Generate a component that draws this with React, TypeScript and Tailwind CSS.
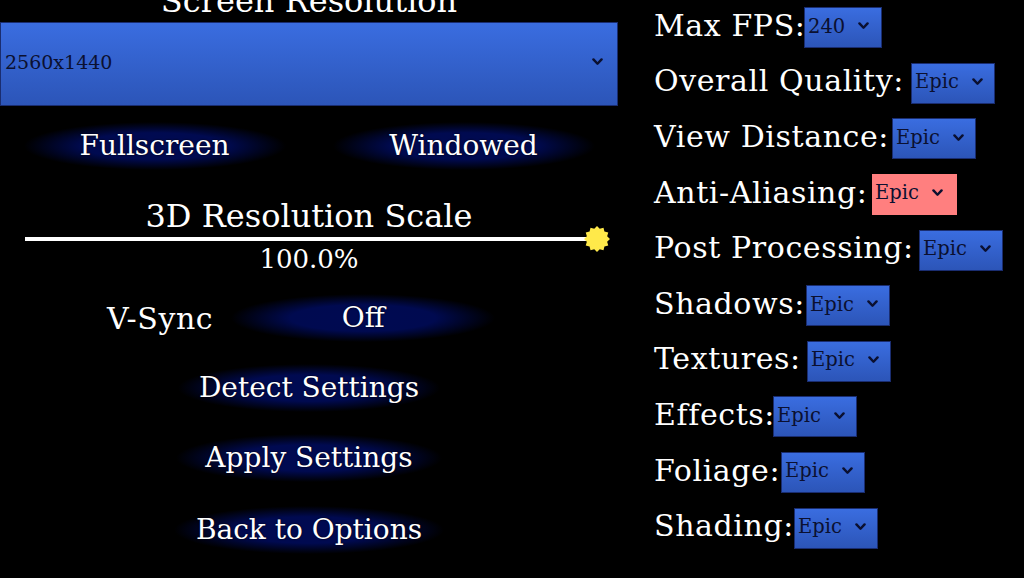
import React from "react";

function Chevron({ size = 10 }: { size?: number }) {
  return (
    <svg width={size} height={size * 0.7} viewBox="0 0 10 7" className="shrink-0">
      <path d="M1.3 1.3 L5 5.2 L8.7 1.3" fill="none" stroke="#0b1030" strokeWidth="2.2" strokeLinecap="round" strokeLinejoin="round" />
    </svg>
  );
}

function Glow({ children, className }: { children: React.ReactNode; className: string }) {
  return (
    <div
      className={
        "flex h-[48px] items-center justify-center bg-[radial-gradient(closest-side,#000a52_0%,#000a50_55%,rgba(0,10,80,0)_100%)] text-white " +
        className
      }
    >
      {children}
    </div>
  );
}

function Star() {
  const pts: string[] = [];
  const n = 12;
  for (let i = 0; i < n * 2; i++) {
    const r = i % 2 === 0 ? 13 : 10.5;
    const a = (Math.PI * i) / n;
    pts.push(`${(13 + r * Math.cos(a)).toFixed(2)},${(13 + r * Math.sin(a)).toFixed(2)}`);
  }
  return (
    <svg width="26" height="26" viewBox="0 0 26 26">
      <polygon points={pts.join(" ")} fill="#ffe94a" />
    </svg>
  );
}

const rows: { label: string; value: string; lw: string; w: string; red?: boolean }[] = [
  { label: "Max FPS:", value: "240", lw: "w-[150px]", w: "w-[78px]" },
  { label: "Overall Quality:", value: "Epic", lw: "w-[257px]", w: "w-[84px]" },
  { label: "View Distance:", value: "Epic", lw: "w-[238px]", w: "w-[84px]" },
  { label: "Anti-Aliasing:", value: "Epic", lw: "w-[218px]", w: "w-[85px]", red: true },
  { label: "Post Processing:", value: "Epic", lw: "w-[265px]", w: "w-[84px]" },
  { label: "Shadows:", value: "Epic", lw: "w-[152px]", w: "w-[84px]" },
  { label: "Textures:", value: "Epic", lw: "w-[153px]", w: "w-[84px]" },
  { label: "Effects:", value: "Epic", lw: "w-[119px]", w: "w-[84px]" },
  { label: "Foliage:", value: "Epic", lw: "w-[127px]", w: "w-[84px]" },
  { label: "Shading:", value: "Epic", lw: "w-[140px]", w: "w-[84px]" },
];

export default function App() {
  return (
    <div className="flex h-[578px] w-[1024px] overflow-hidden bg-black font-['DejaVu_Serif',serif] text-white [text-shadow:0_0_2px_#000]">
      {/* Left column */}
      <div className="flex w-[618px] shrink-0 flex-col">
        <div className="-mt-[17px] h-[36px] text-center text-[32px] leading-[36px]">Screen Resolution</div>
        <div className="mt-[3px] flex h-[84px] items-center justify-between border border-[#1a2d70] bg-gradient-to-b from-[#3a6de0] to-[#2c55b8] pb-[4px] pl-[4px] pr-[14px] text-[19px] text-[#0b1030] [text-shadow:none]">
          <span>2560x1440</span>
          <Chevron size={11} />
        </div>
        <div className="mt-[16px] grid grid-cols-2">
          <div className="flex justify-center">
            <Glow className="w-[262px] text-[28px]">Fullscreen</Glow>
          </div>
          <div className="flex justify-center">
            <Glow className="w-[262px] text-[28px]">Windowed</Glow>
          </div>
        </div>
        <div className="mt-[27px] h-[38px] text-center text-[32px] leading-[38px]">3D Resolution Scale</div>
        <div className="relative mt-[2px] ml-[25px] h-[4px] w-[568px] bg-white">
          <div className="absolute -right-[17px] -top-[11px]">
            <Star />
          </div>
        </div>
        <div className="mt-[4px] h-[28px] text-center text-[26px] leading-[28px]">100.0%</div>
        <div className="mt-[21px] flex h-[48px] items-center">
          <div className="ml-[107px] text-[30px] tracking-[0.6px]">V-Sync</div>
          <Glow className="ml-[18px] w-[264px] text-[28px]">Off</Glow>
        </div>
        <div className="mt-[22px] flex justify-center">
          <Glow className="w-[262px] text-[28px]">Detect Settings</Glow>
        </div>
        <div className="mt-[22px] flex justify-center">
          <Glow className="w-[266px] text-[28px]">Apply Settings</Glow>
        </div>
        <div className="mt-[24px] flex justify-center">
          <Glow className="w-[270px] text-[28px]">Back to Options</Glow>
        </div>
      </div>

      {/* Right column */}
      <div className="ml-[36px] flex flex-col">
        {rows.map((r) => (
          <div key={r.label} className="flex h-[55.6px] items-center">
            <span className={"mb-[4px] whitespace-nowrap text-[30px] leading-[36px] tracking-[0.6px] " + r.lw}>{r.label}</span>
            <div
              className={
                "flex h-[41px] items-center gap-[13px] pb-[3px] pl-[3px] text-[19.5px] text-[#0b1030] [text-shadow:none] " +
                r.w +
                (r.red ? " bg-[#ff7f7f]" : " border border-[#1a2d70] bg-gradient-to-b from-[#3a6de0] to-[#2c55b8]")
              }
            >
              <span>{r.value}</span>
              <Chevron size={11} />
            </div>
          </div>
        ))}
      </div>
    </div>
  );
}
